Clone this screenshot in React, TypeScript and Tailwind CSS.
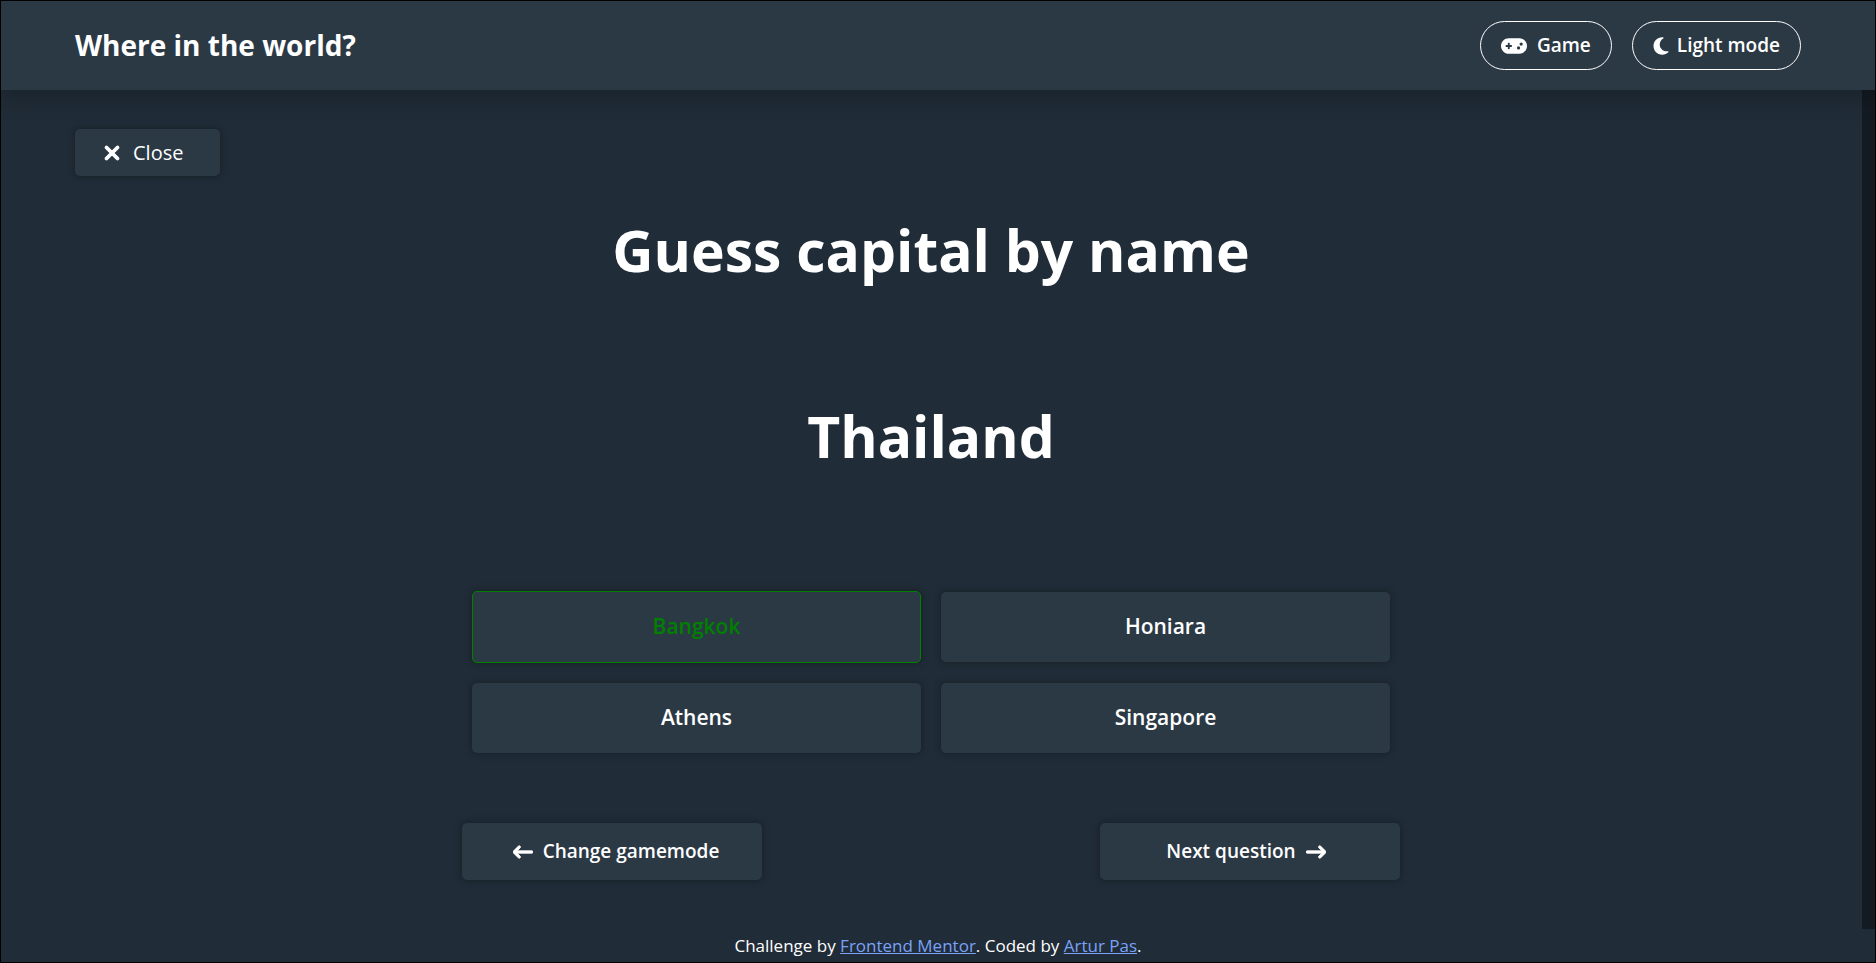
import { FaGamepad, FaMoon, FaXmark, FaArrowLeftLong, FaArrowRightLong } from "react-icons/fa6";

const card = "rounded-[5px] bg-[#2b3945] shadow-[0_0_7px_1px_rgba(0,0,0,0.25)]";

const options = [
  { name: "Bangkok", correct: true },
  { name: "Honiara", correct: false },
  { name: "Athens", correct: false },
  { name: "Singapore", correct: false },
];

function Header() {
  const pill = "flex h-[49px] items-center rounded-full border border-white px-5 text-[19px] font-semibold text-white";
  return (
    <header className="z-10 flex h-[89px] shrink-0 items-center justify-between bg-[#2b3945] px-[74px] shadow-[0_10px_20px_rgba(0,0,0,0.2)]">
      <h1 className="pb-0.5 text-[28px] font-bold">Where in the world?</h1>
      <div className="flex gap-5">
        <button className={pill}>
          <FaGamepad className="mr-2.5 size-[26px]" />
          Game
        </button>
        <button className={pill}>
          <FaMoon className="mr-2 h-5 w-4" />
          Light mode
        </button>
      </div>
    </header>
  );
}

function Game() {
  return (
    <main className="min-w-0 flex-1 pt-[39px] pr-px">
      <button className={`${card} ml-[74px] flex h-[47px] w-[145px] items-center pl-[26px] text-xl`}>
        <FaXmark className="mr-2.5 size-[22px] stroke-white stroke-[24px]" />
        Close
      </button>
      <h2 className="mt-[34px] text-center text-[57px] leading-20 font-bold">Guess capital by name</h2>
      <p className="mt-[106px] text-center text-[57px] leading-20 font-bold">Thailand</p>
      <div className="mx-auto mt-[115px] grid w-[918px] max-w-full grid-cols-2 items-center gap-5">
        {options.map((option) => (
          <button
            key={option.name}
            className={`${card} text-[21px] font-semibold ${option.correct ? "h-[72px] border border-[#008000] text-[#008000]" : "h-[70px]"}`}
          >
            {option.name}
          </button>
        ))}
      </div>
      <div className="mx-auto mt-[70px] flex w-[938px] max-w-full justify-between text-[19px] font-semibold">
        <button className={`${card} flex h-[57px] w-[300px] items-center justify-center gap-2.5 pl-2`}>
          <FaArrowLeftLong className="size-5 stroke-white stroke-[20px]" />
          Change gamemode
        </button>
        <button className={`${card} flex h-[57px] w-[300px] items-center justify-center gap-2.5 pr-2`}>
          Next question
          <FaArrowRightLong className="size-5 stroke-white stroke-[20px]" />
        </button>
      </div>
    </main>
  );
}

export default function App() {
  return (
    <div className="flex min-h-screen flex-col border border-black bg-[#202c37] font-['Open_Sans',sans-serif] text-white">
      <Header />
      <div className="flex flex-1">
        <Game />
        <div className="w-[13px] bg-[#131a21]" />
      </div>
      <footer className="flex h-[33px] shrink-0 items-center justify-center text-[17px]">
        <p>
          Challenge by{" "}
          <a className="text-[#7aa2f7] underline" href="#frontend-mentor">Frontend Mentor</a>. Coded by{" "}
          <a className="text-[#7aa2f7] underline" href="#artur-pas">Artur Pas</a>.
        </p>
      </footer>
    </div>
  );
}
